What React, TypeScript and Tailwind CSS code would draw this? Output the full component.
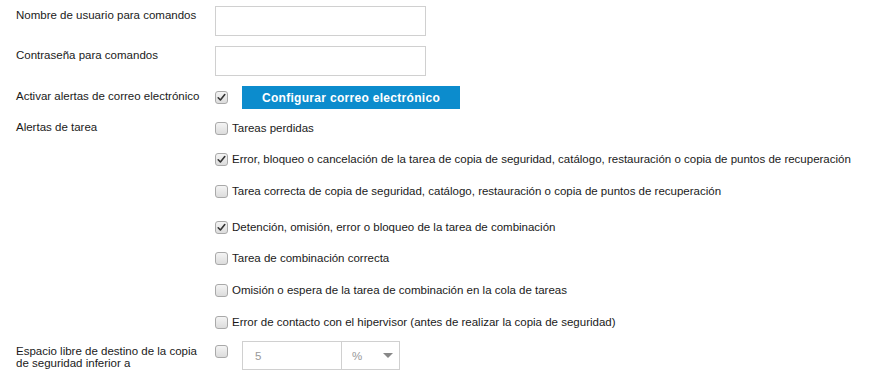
import React from "react";

function Check({ checked }: { checked?: boolean }) {
  return (
    <span className="inline-flex h-[13px] w-[13px] shrink-0 items-center justify-center rounded-[3px] border border-[#a9a9a9] bg-gradient-to-b from-[#f4f4f4] to-[#dcdcdc]">
      {checked && (
        <svg width="9" height="9" viewBox="0 0 9 9">
          <path d="M1.2 4.8 L3.4 7 L7.8 1.6" fill="none" stroke="#333" strokeWidth="1.6" strokeLinecap="round" strokeLinejoin="round" />
        </svg>
      )}
    </span>
  );
}

const options: { text: string; checked: boolean; mt: string }[] = [
  { text: "Tareas perdidas", checked: false, mt: "mt-0" },
  { text: "Error, bloqueo o cancelación de la tarea de copia de seguridad, catálogo, restauración o copia de puntos de recuperación", checked: true, mt: "mt-[17px]" },
  { text: "Tarea correcta de copia de seguridad, catálogo, restauración o copia de puntos de recuperación", checked: false, mt: "mt-[18px]" },
  { text: "Detención, omisión, error o bloqueo de la tarea de combinación", checked: true, mt: "mt-[22px]" },
  { text: "Tarea de combinación correcta", checked: false, mt: "mt-[17px]" },
  { text: "Omisión o espera de la tarea de combinación en la cola de tareas", checked: false, mt: "mt-[18px]" },
  { text: "Error de contacto con el hipervisor (antes de realizar la copia de seguridad)", checked: false, mt: "mt-[18px]" },
];

export default function App() {
  return (
    <div
      className="h-[389px] w-[890px] overflow-hidden bg-white pl-4 text-[11.5px] leading-[14px] text-[#1a1a1a]"
      style={{ fontFamily: '"Liberation Sans", Arial, sans-serif' }}
    >
      <div className="flex pt-[6px]">
        <div className="w-[199px] pt-[2px]">Nombre de usuario para comandos</div>
        <div className="h-[30px] w-[211px] border border-[#d0d0d0] bg-white" />
      </div>
      <div className="mt-[10px] flex">
        <div className="w-[199px] pt-[2px]">Contraseña para comandos</div>
        <div className="h-[30px] w-[211px] border border-[#d0d0d0] bg-white" />
      </div>
      <div className="mt-[10px] flex items-center">
        <div className="w-[199px] -mt-[3px]">Activar alertas de correo electrónico</div>
        <Check checked />
        <button className="ml-[14px] flex h-[23px] w-[218px] items-center justify-center bg-[#0c8ccd] text-[12px] font-bold tracking-[0.3px] text-white">
          Configurar correo electrónico
        </button>
      </div>
      <div className="mt-[12px] flex">
        <div className="w-[199px] -mt-[1px]">Alertas de tarea</div>
        <div className="flex flex-col">
          {options.map((o) => (
            <div key={o.text} className={`flex items-center gap-[4px] ${o.mt}`}>
              <Check checked={o.checked} />
              <span>{o.text}</span>
            </div>
          ))}
        </div>
      </div>
      <div className="mt-[12px] flex">
        <div className="w-[199px] pt-[4px] leading-[12px]">
          Espacio libre de destino de la copia
          <br />
          de seguridad inferior a
        </div>
        <div className="pt-[4px]">
          <Check />
        </div>
        <div className="ml-[14px] flex h-[29px]">
          <div className="flex w-[100px] items-center border border-[#d0d0d0] pl-[12px] text-[#999]">5</div>
          <div className="flex w-[58px] items-center justify-between border border-l-0 border-[#d0d0d0] pl-[10px] pr-[6px] text-[#999]">
            <span>%</span>
            <svg width="10" height="6" viewBox="0 0 10 6">
              <path d="M0 0 H10 L5 5 Z" fill="#888" />
            </svg>
          </div>
        </div>
      </div>
    </div>
  );
}
